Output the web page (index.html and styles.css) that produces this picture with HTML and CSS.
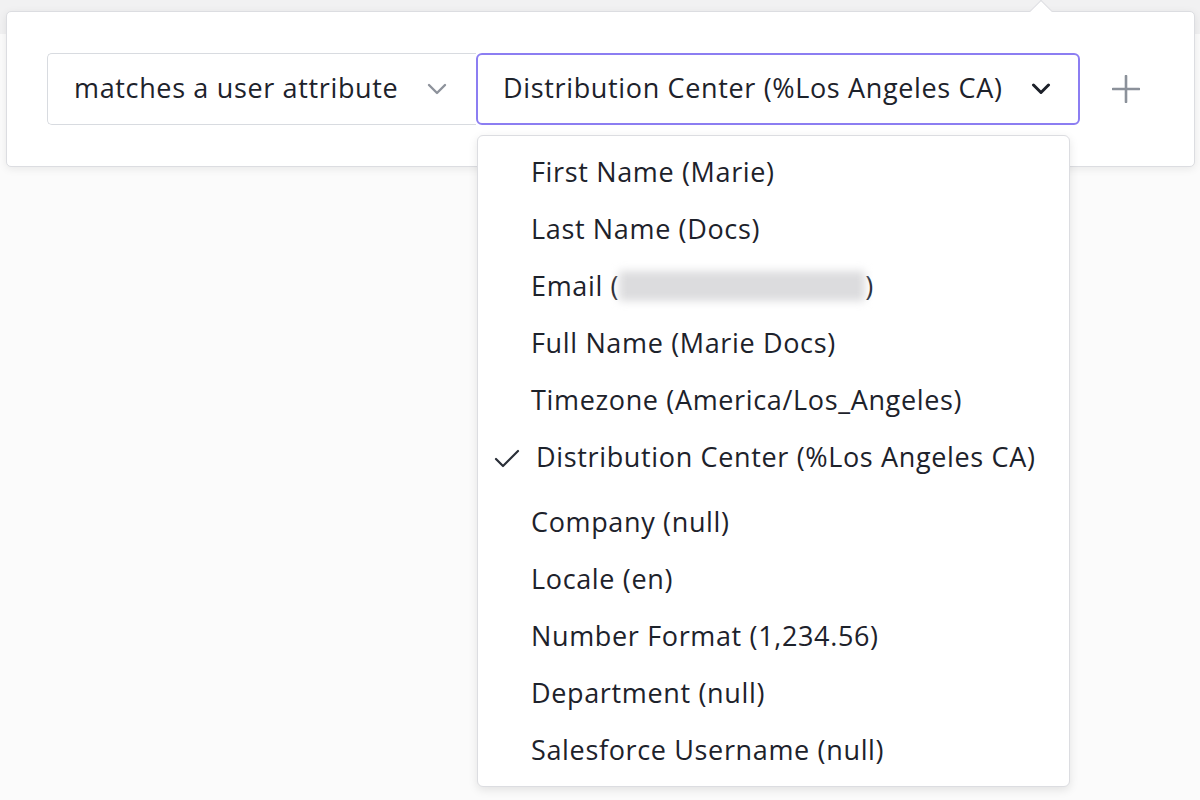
FILE: index.html
```html
<!DOCTYPE html>
<html>
<head>
<meta charset="utf-8">
<link rel="stylesheet" href="styles.css">
</head>
<body>
<div class="topband"></div>
<div class="wrap">
  <div class="panel">
    <span class="notch"></span>
    <div class="row">
      <div class="select select-op">
        <span class="label">matches a user attribute</span>
        <svg class="chev chev-light" width="20" height="12" viewBox="0 0 20 12"><path d="M2 2 L10 10 L18 2" fill="none" stroke="#8d929b" stroke-width="2.4" stroke-linecap="round" stroke-linejoin="round"/></svg>
      </div>
      <div class="select select-attr">
        <span class="label">Distribution Center (%Los Angeles CA)</span>
        <svg class="chev" width="20" height="12" viewBox="0 0 20 12"><path d="M2.5 2 L10 9.5 L17.5 2" fill="none" stroke="#1c2029" stroke-width="3" stroke-linecap="round" stroke-linejoin="round"/></svg>
      </div>
      <svg class="plus" width="28" height="28" viewBox="0 0 28 28"><path d="M14 1 V27 M1 14 H27" stroke="#8b919a" stroke-width="2.6" stroke-linecap="round"/></svg>
    </div>
    <ul class="menu">
      <li class="item">First Name (Marie)</li>
      <li class="item">Last Name (Docs)</li>
      <li class="item">Email (<span class="blur"></span>)</li>
      <li class="item">Full Name (Marie Docs)</li>
      <li class="item">Timezone (America/Los_Angeles)</li>
      <li class="item item-selected"><svg class="check" width="26" height="20" viewBox="0 0 26 20"><path d="M2 10 L9 17 L24 2" fill="none" stroke="#2a2f38" stroke-width="2.2" stroke-linecap="round" stroke-linejoin="round"/></svg>Distribution Center (%Los Angeles CA)</li>
      <li class="item">Company (null)</li>
      <li class="item">Locale (en)</li>
      <li class="item">Number Format (1,234.56)</li>
      <li class="item">Department (null)</li>
      <li class="item">Salesforce Username (null)</li>
    </ul>
  </div>
</div>
</body>
</html>
```

FILE: styles.css
```css
* { box-sizing: border-box; }
html, body { margin: 0; padding: 0; }
body {
  width: 1200px;
  height: 800px;
  overflow: hidden;
  background: #fbfbfb;
  font-family: "Open Sans", "Liberation Sans", sans-serif;
  color: #1d222b;
  position: relative;
}
.topband {
  position: absolute;
  left: 0; top: 0; right: 0;
  height: 34px;
  background: #f1f1f2;
}
.wrap {
  position: relative;
  padding: 11px 5px 0 6px;
}
.panel {
  position: relative;
  height: 156px;
  background: #fff;
  border: 1px solid #dcdde1;
  border-radius: 5px;
  box-shadow: 0 2px 8px rgba(0,0,0,0.08);
  padding: 41px 0 0 40px;
}
.notch {
  position: absolute;
  top: -9px;
  left: 1026px;
  width: 16px;
  height: 16px;
  background: #fff;
  border-left: 1px solid #dcdde1;
  border-top: 1px solid #dcdde1;
  transform: rotate(45deg);
}
.row {
  display: flex;
  align-items: center;
}
.select {
  height: 72px;
  display: flex;
  align-items: center;
  justify-content: space-between;
  background: #fff;
  font-size: 27px;
  letter-spacing: 0.65px;
}
.select-op {
  width: 429px;
  border: 1px solid #d8dbe0;
  border-right: none;
  border-radius: 5px 0 0 5px;
  padding: 0 29px 0 26px;
}
.select-attr {
  width: 604px;
  border: 2px solid #8c7ef2;
  border-radius: 6px;
  padding: 0 27px 0 25px;
}
.label { white-space: nowrap; line-height: 1; position: relative; top: -2px; }
.plus { margin-left: 32px; }
.menu {
  position: absolute;
  left: 470px;
  top: 123px;
  width: 593px;
  margin: 0;
  padding: 17px 0 0 0;
  list-style: none;
  height: 652px;
  background: #fff;
  border: 1px solid #dcdde1;
  border-radius: 6px;
  box-shadow: 0 3px 10px rgba(0,0,0,0.10);
}
.item {
  height: 57px;
  padding-left: 53px;
  font-size: 27px;
  letter-spacing: 0.65px;
  line-height: 38px;
  white-space: nowrap;
  display: flex;
  align-items: flex-start;
}
.item-selected {
  height: 65px;
  padding-left: 16px;
}
.check { margin: 11px 16px 0 0; flex: none; }
.blur {
  display: inline-block;
  width: 246px;
  height: 30px;
  margin-top: 4px;
  background: #dcdcde;
  filter: blur(4px);
}
```
